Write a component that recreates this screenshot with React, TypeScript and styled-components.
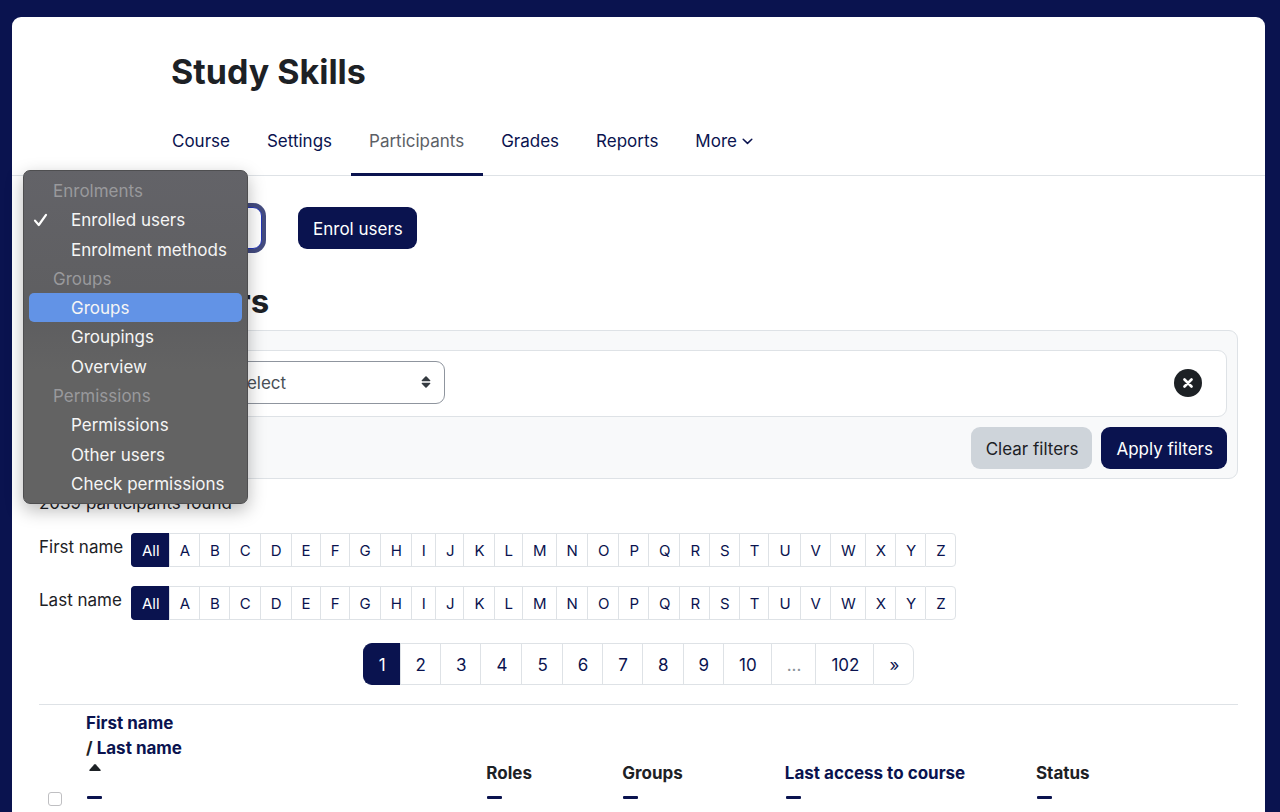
import React from "react";
import styled, { createGlobalStyle } from "styled-components";

const navy = "#0a134f";
const ink = "#1d2125";
const line = "#dee2e6";

const GlobalStyle = createGlobalStyle`
  *, *::before, *::after { box-sizing: border-box; }
  body {
    margin: 0;
    background: ${navy};
    color: ${ink};
    font-family: Inter, "Liberation Sans", sans-serif;
    font-size: 17px;
    line-height: 25px;
  }
  button, select, input { font: inherit; color: inherit; margin: 0; }
  a { color: ${navy}; text-decoration: none; }
`;

const Page = styled.div`
  display: flex;
  flex-direction: column;
  min-height: 100vh;
  padding: 17px 15px 0 12px;
`;

const Card = styled.div`
  flex: 1;
  background: #fff;
  border-radius: 9px 9px 0 0;
`;

const Header = styled.header`
  padding: 33px 142px 0;
  border-bottom: 1px solid ${line};
`;

const Title = styled.h1`
  margin: 0;
  padding: 0 17px;
  font-size: 34px;
  line-height: 44px;
  font-weight: 700;
`;

const Tabs = styled.nav`
  display: flex;
  margin-top: 12px;
`;

const Tab = styled.a<{ $active?: boolean }>`
  display: flex;
  align-items: center;
  gap: 5px;
  height: 70px;
  margin-bottom: -1px;
  padding: 0 19px 0 18px;
  border-top: 3px solid transparent;
  border-bottom: 3px solid ${(p) => (p.$active ? navy : "transparent")};
  color: ${(p) => (p.$active ? "#5c6066" : navy)};
`;

const Main = styled.main`
  padding: 31px 27px 0;
`;

const Toolbar = styled.div`
  display: flex;
  gap: 36px;
`;

const Jump = styled.div`
  position: relative;
  width: 223px;
`;

const JumpSelect = styled.select`
  display: block;
  appearance: none;
  width: 100%;
  height: 42px;
  padding: 0 16px;
  border: 1px solid #2335b5;
  border-radius: 9px;
  outline: 0;
  background: #fff;
  box-shadow: 0 0 0 4px #444c80;
`;

const Menu = styled.div`
  position: absolute;
  z-index: 2;
  top: -37px;
  left: -16px;
  display: grid;
  grid-auto-rows: 1fr;
  width: 225px;
  height: 334px;
  padding: 5px;
  border: 1px solid #4e4e50;
  border-radius: 7px;
  background: linear-gradient(#636368, #5e5e60 45%, #636363 60%, #636363);
  box-shadow: 0 6px 18px rgba(0, 0, 0, 0.28);
`;

const MenuHeading = styled.div`
  display: flex;
  align-items: center;
  padding: 2px 0 0 24px;
  color: #99999c;
`;

const MenuItem = styled.div<{ $highlighted?: boolean }>`
  display: flex;
  align-items: center;
  padding: 2px 0 0 4px;
  border-radius: 5px;
  color: #f5f5f5;
  white-space: nowrap;
  background: ${(p) => (p.$highlighted ? "#6293e6" : "transparent")};
`;

const Tick = styled.span`
  display: flex;
  flex: none;
  width: 38px;
`;

const Button = styled.button<{ $tone?: "muted" }>`
  height: 42px;
  padding: 2px 14px 0 15px;
  border: 0;
  border-radius: 9px;
  white-space: nowrap;
  background: ${(p) => (p.$tone === "muted" ? "#ced4da" : navy)};
  color: ${(p) => (p.$tone === "muted" ? ink : "#fff")};
`;

const Heading = styled.h2`
  margin: 32px 0 0;
  font-size: 33px;
  line-height: 40px;
  font-weight: 700;
`;

const Filters = styled.form`
  display: flex;
  flex-direction: column;
  gap: 10px;
  margin-top: 9px;
  padding: 19px 10px 9px;
  border: 1px solid ${line};
  border-radius: 9px;
  background: #f8f9fa;
`;

const FilterRow = styled.div`
  display: flex;
  align-items: center;
  justify-content: space-between;
  height: 67px;
  padding: 0 24px 2px 168px;
  border: 1px solid ${line};
  border-radius: 9px;
  background: #fff;
`;

const SelectBox = styled.div`
  position: relative;
  width: 226px;

  svg {
    position: absolute;
    top: 15px;
    right: 14px;
    pointer-events: none;
  }
`;

const FilterSelect = styled.select`
  display: block;
  appearance: none;
  width: 100%;
  height: 43px;
  padding: 2px 16px 0;
  border: 1px solid #8f959e;
  border-radius: 9px;
  background: #fff;
  color: #495057;
`;

const RemoveButton = styled.button`
  display: flex;
  align-items: center;
  justify-content: center;
  width: 28px;
  height: 28px;
  padding: 0;
  border: 0;
  border-radius: 50%;
  background: ${ink};
`;

const FilterActions = styled.div`
  display: flex;
  justify-content: flex-end;
  gap: 9px;
`;

const Found = styled.p`
  margin: 12px 0 0;
`;

const InitialsBar = styled.nav<{ $first?: boolean }>`
  display: flex;
  gap: 9px;
  margin-top: ${(p) => (p.$first ? 17 : 19)}px;
`;

const InitialsLabel = styled.span`
  width: 83px;
  padding-top: 2px;
  white-space: nowrap;
`;

const Pages = styled.div<{ $round: number }>`
  display: flex;
  > :first-child {
    border-radius: ${(p) => p.$round}px 0 0 ${(p) => p.$round}px;
  }
  > :last-child {
    border-right: 1px solid ${line};
    border-radius: 0 ${(p) => p.$round}px ${(p) => p.$round}px 0;
  }
`;

const Initial = styled.a<{ $active?: boolean }>`
  height: 34px;
  padding: 0 9px 0 10px;
  border: 1px solid ${(p) => (p.$active ? navy : line)};
  border-right: 0;
  font-size: 15px;
  line-height: 33px;
  background: ${(p) => (p.$active ? navy : "#fff")};
  color: ${(p) => (p.$active ? "#fff" : navy)};
`;

const Pagination = styled.nav`
  display: flex;
  justify-content: center;
  margin-top: 23px;
`;

const PageLink = styled.a<{ $active?: boolean; $disabled?: boolean }>`
  height: 42px;
  padding: 0 14px 0 15px;
  border: 1px solid ${(p) => (p.$active ? navy : line)};
  border-right: 0;
  line-height: 42px;
  background: ${(p) => (p.$active ? navy : "#fff")};
  color: ${(p) => (p.$active ? "#fff" : p.$disabled ? "#8a9199" : navy)};
`;

const Table = styled.table`
  width: 100%;
  margin-top: 19px;
  border-collapse: collapse;
  border-top: 1px solid ${line};
  table-layout: fixed;
`;

const Th = styled.th<{ $width?: string }>`
  width: ${(p) => p.$width || "auto"};
  padding: 6px 0 0 9px;
  text-align: left;
  vertical-align: bottom;
  font-weight: 700;
`;

const Sort = styled.span`
  display: flex;
  height: 25px;
  padding: 3px 0 0 3px;
`;

const HideButton = styled.button`
  display: flex;
  align-items: center;
  height: 23px;
  padding: 0 1px;
  border: 0;
  background: none;
`;

const CheckBox = styled.input`
  display: block;
  appearance: none;
  width: 14px;
  height: 14px;
  margin-bottom: 3px;
  border: 1px solid #bfbfc2;
  border-radius: 3px;
  background: #fff;
`;

const Minus = () => (
  <svg width="15" height="3" viewBox="0 0 15 3" aria-hidden="true">
    <rect width="15" height="3" rx="1" fill={navy} />
  </svg>
);

const groups = [
  { label: "Enrolments", items: ["Enrolled users", "Enrolment methods"] },
  { label: "Groups", items: ["Groups", "Groupings", "Overview"] },
  { label: "Permissions", items: ["Permissions", "Other users", "Check permissions"] },
];

const tabs = ["Course", "Settings", "Participants", "Grades", "Reports"];
const letters = ["All", ..."ABCDEFGHIJKLMNOPQRSTUVWXYZ"];
const pages = ["1", "2", "3", "4", "5", "6", "7", "8", "9", "10", "...", "102", "»"];

function Initials({ label, first }: { label: string; first?: boolean }) {
  return (
    <InitialsBar $first={first} aria-label={label}>
      <InitialsLabel>{label}</InitialsLabel>
      <Pages $round={4}>
        {letters.map((l) => (
          <Initial key={l} href="#" $active={l === "All"}>{l}</Initial>
        ))}
      </Pages>
    </InitialsBar>
  );
}

function JumpMenu() {
  return (
    <Jump>
      <JumpSelect aria-label="Participants navigation" defaultValue="Enrolled users">
        {groups.map((g) => (
          <optgroup key={g.label} label={g.label}>
            {g.items.map((i) => <option key={i}>{i}</option>)}
          </optgroup>
        ))}
      </JumpSelect>
      <Menu role="listbox">
        {groups.map((g) => (
          <React.Fragment key={g.label}>
            <MenuHeading>{g.label}</MenuHeading>
            {g.items.map((i) => (
              <MenuItem key={i} role="option" aria-selected={i === "Enrolled users"} $highlighted={i === "Groups"}>
                <Tick>
                  {i === "Enrolled users" && (
                    <svg width="15" height="15" viewBox="0 0 15 15" fill="none" stroke="#fff" strokeWidth="2.2" strokeLinecap="round" strokeLinejoin="round" aria-hidden="true">
                      <path d="M2 7.6 5.800 12 13 1.800" />
                    </svg>
                  )}
                </Tick>
                {i}
              </MenuItem>
            ))}
          </React.Fragment>
        ))}
      </Menu>
    </Jump>
  );
}

export default function App() {
  return (
    <>
      <GlobalStyle />
      <Page>
        <Card>
          <Header>
            <Title>Study Skills</Title>
            <Tabs>
              {tabs.map((t) => (
                <Tab key={t} href="#" $active={t === "Participants"}>{t}</Tab>
              ))}
              <Tab href="#">
                More
                <svg width="11" height="7" viewBox="0 0 11 7" fill="none" stroke={navy} strokeWidth="1.5" strokeLinecap="round" strokeLinejoin="round" aria-hidden="true">
                  <path d="M1.2 1.2 5.5 5.4 9.8 1.2" />
                </svg>
              </Tab>
            </Tabs>
          </Header>
          <Main>
            <Toolbar>
              <JumpMenu />
              <Button type="button">Enrol users</Button>
            </Toolbar>
            <Heading>Enrolled users</Heading>
            <Filters>
              <FilterRow>
                <SelectBox>
                  <FilterSelect aria-label="Filter type">
                    <option>Select</option>
                  </FilterSelect>
                  <svg width="10" height="12" viewBox="0 0 11 14" fill="#343a40" aria-hidden="true">
                    <path d="M1 6h9q1-.2.4-1L6.2.6q-.7-.7-1.4 0L.6 5Q0 5.8 1 6zM1 8h9q1 .2.4 1L6.2 13.4q-.7.7-1.4 0L.6 9Q0 8.2 1 8z" />
                  </svg>
                </SelectBox>
                <RemoveButton type="button" aria-label="Remove filter row">
                  <svg width="10" height="10" viewBox="0 0 10 10" stroke="#fff" strokeWidth="2.6" strokeLinecap="round" aria-hidden="true">
                    <path d="M1.5 1.5 8.5 8.5M8.5 1.5 1.5 8.5" />
                  </svg>
                </RemoveButton>
              </FilterRow>
              <FilterActions>
                <Button type="button" $tone="muted">Clear filters</Button>
                <Button type="button">Apply filters</Button>
              </FilterActions>
            </Filters>
            <Found>2039 participants found</Found>
            <Initials label="First name" first />
            <Initials label="Last name" />
            <Pagination aria-label="Page">
              <Pages $round={9}>
                {pages.map((p) => (
                  <PageLink key={p} href="#" $active={p === "1"} $disabled={p === "..."}>{p}</PageLink>
                ))}
              </Pages>
            </Pagination>
            <Table>
              <thead>
                <tr>
                  <Th $width="38px"><CheckBox type="checkbox" aria-label="Select all" /></Th>
                  <Th>
                    <a href="#">First name</a><br />
                    / <a href="#">Last name</a>
                    <Sort>
                      <svg width="12" height="7" viewBox="0 0 12 7" fill={ink} aria-hidden="true">
                        <path d="M1 7h10q1.2-.3.5-1.2L6.8.4q-.8-.7-1.6 0L.5 5.8Q-.2 6.7 1 7z" />
                      </svg>
                    </Sort>
                    <HideButton type="button" aria-label="Hide name"><Minus /></HideButton>
                  </Th>
                  <Th $width="11.35%">Roles<HideButton type="button" aria-label="Hide roles"><Minus /></HideButton></Th>
                  <Th $width="13.55%">Groups<HideButton type="button" aria-label="Hide groups"><Minus /></HideButton></Th>
                  <Th $width="20.95%"><a href="#">Last access to course</a><HideButton type="button" aria-label="Hide last access"><Minus /></HideButton></Th>
                  <Th $width="17.6%">Status<HideButton type="button" aria-label="Hide status"><Minus /></HideButton></Th>
                </tr>
              </thead>
            </Table>
          </Main>
        </Card>
      </Page>
    </>
  );
}
